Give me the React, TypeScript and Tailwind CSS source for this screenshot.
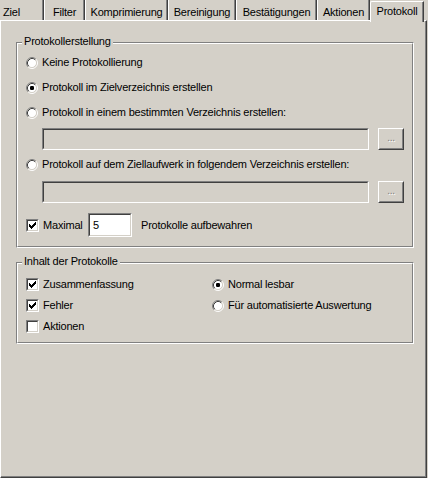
import React from "react";

const Radio = ({ checked = false }: { checked?: boolean }) => (
  <svg width="12" height="12" viewBox="0 0 12 12" className="shrink-0">
    <circle cx="6" cy="6" r="4.5" fill="#ffffff" />
    <path d="M2.11 9.89 A5.5 5.5 0 0 1 9.89 2.11" fill="none" stroke="#808080" />
    <path d="M9.89 2.11 A5.5 5.5 0 0 1 2.11 9.89" fill="none" stroke="#ffffff" />
    <path d="M2.82 9.18 A4.5 4.5 0 0 1 9.18 2.82" fill="none" stroke="#404040" />
    <path d="M9.18 2.82 A4.5 4.5 0 0 1 2.82 9.18" fill="none" stroke="#d4d0c8" />
    {checked && <rect x="4" y="4" width="4" height="4" rx="1.2" fill="#000000" />}
  </svg>
);

const checkCols = [2, 3, 4, 3, 2, 1, 0];

const Checkbox = ({ checked = false }: { checked?: boolean }) => (
  <div className="w-[13px] h-[13px] shrink-0 border border-t-[#808080] border-l-[#808080] border-b-white border-r-white">
    <div className="w-full h-full border border-t-[#404040] border-l-[#404040] border-b-[#d4d0c8] border-r-[#d4d0c8] bg-white">
      {checked && (
        <svg width="9" height="9" viewBox="0 0 9 9" shapeRendering="crispEdges">
          {checkCols.map((top, i) => (
            <rect key={i} x={i + 1} y={top + 1} width="1" height="3" fill="#000000" />
          ))}
        </svg>
      )}
    </div>
  </div>
);

const Sunken = ({ className, white, children }: { className: string; white?: boolean; children?: React.ReactNode }) => (
  <div className={`${className} shrink-0 border border-t-[#808080] border-l-[#808080] border-b-white border-r-white`}>
    <div
      className={`w-full h-full border border-t-[#404040] border-l-[#404040] border-b-[#d4d0c8] border-r-[#d4d0c8] flex items-center pl-[2px] ${
        white ? "bg-white" : "bg-[#d4d0c8]"
      }`}
    >
      {children}
    </div>
  </div>
);

const BrowseButton = () => (
  <div className="w-[26px] h-[22px] shrink-0 border border-t-white border-l-white border-b-[#404040] border-r-[#404040]">
    <div className="w-full h-full border border-t-[#d4d0c8] border-l-[#d4d0c8] border-b-[#808080] border-r-[#808080] flex items-center justify-center text-[#808080] [text-shadow:1px_1px_0_#ffffff] text-[10px] leading-none pb-[2px]">
      ...
    </div>
  </div>
);

const GroupBox = ({ title, className, children }: { title: string; className: string; children: React.ReactNode }) => (
  <div className={`relative ml-[15px] w-[398px] border border-t-[#808080] border-l-[#808080] border-b-white border-r-white ${className}`}>
    <div className="h-full border border-t-white border-l-white border-b-[#808080] border-r-[#808080]">{children}</div>
    <span className="absolute left-[5px] top-[-8px] px-[2px] bg-[#d4d0c8]">{title}</span>
  </div>
);

const Tab = ({ label, className, active }: { label: string; className: string; active?: boolean }) => (
  <div
    className={`${className} flex justify-center border-l border-l-white border-r border-r-[#404040] shadow-[inset_-1px_0_0_#808080] bg-[#d4d0c8] ${
      active
        ? "relative z-10 self-start mt-[1px] h-[21px] border-t border-t-white rounded-tl-[2px] items-start pt-[3px]"
        : "h-[20px] items-center pt-[4px]"
    }`}
  >
    {label}
  </div>
);

export default function App() {
  return (
    <div className="w-[428px] h-[478px] bg-[#d4d0c8] text-black text-[11px] leading-[13px] tracking-[-0.2px] font-['Liberation_Sans',Arial,sans-serif] overflow-hidden">
      {/* Tabs */}
      <div className="flex h-[20px]">
        <Tab label="Ziel" className="w-[46px] ml-[-2px] !justify-start pl-[4px]" />
        <Tab label="Filter" className="w-[41px]" />
        <Tab label="Komprimierung" className="w-[83px]" />
        <Tab label="Bereinigung" className="w-[68px]" />
        <Tab label="Bestätigungen" className="w-[81px]" />
        <Tab label="Aktionen" className="w-[53px]" />
        <Tab label="Protokoll" className="w-[54px]" active />
      </div>

      {/* Panel */}
      <div className="w-[427px] h-[458px] border-l border-t border-l-white border-t-white border-r border-b border-r-[#404040] border-b-[#404040] shadow-[inset_-1px_-1px_0_#808080] pt-[21px]">
        <GroupBox title="Protokollerstellung" className="h-[206px]">
          <div className="flex flex-col pt-[12px] pl-[8px]">
            <div className="flex items-center gap-[4px] h-[13px]">
              <Radio />
              <span>Keine Protokollierung</span>
            </div>
            <div className="flex items-center gap-[4px] h-[13px] mt-[12px]">
              <Radio checked />
              <span>Protokoll im Zielverzeichnis erstellen</span>
            </div>
            <div className="flex items-center gap-[4px] h-[13px] mt-[12px]">
              <Radio />
              <span>Protokoll in einem bestimmten Verzeichnis erstellen:</span>
            </div>
            <div className="flex items-center gap-[9px] mt-[9px] ml-[16px]">
              <Sunken className="w-[327px] h-[22px]" />
              <BrowseButton />
            </div>
            <div className="flex items-center gap-[4px] h-[13px] mt-[8px]">
              <Radio />
              <span>Protokoll auf dem Ziellaufwerk in folgendem Verzeichnis erstellen:</span>
            </div>
            <div className="flex items-center gap-[9px] mt-[10px] ml-[16px]">
              <Sunken className="w-[327px] h-[22px]" />
              <BrowseButton />
            </div>
            <div className="flex items-center h-[24px] mt-[10px]">
              <Checkbox checked />
              <span className="ml-[4px] w-[45px] shrink-0">Maximal</span>
              <Sunken className="w-[44px] h-[24px]" white>
                <span className="pl-[1px]">5</span>
              </Sunken>
              <span className="ml-[9px]">Protokolle aufbewahren</span>
            </div>
          </div>
        </GroupBox>

        <GroupBox title="Inhalt der Protokolle" className="h-[82px] mt-[14px]">
          <div className="grid grid-cols-[186px_1fr] gap-y-[8px] pt-[14px] pl-[8px]">
            <div className="flex items-center gap-[4px] h-[13px]">
              <Checkbox checked />
              <span>Zusammenfassung</span>
            </div>
            <div className="flex items-center gap-[4px] h-[13px]">
              <Radio checked />
              <span>Normal lesbar</span>
            </div>
            <div className="flex items-center gap-[4px] h-[13px]">
              <Checkbox checked />
              <span>Fehler</span>
            </div>
            <div className="flex items-center gap-[4px] h-[13px]">
              <Radio />
              <span>Für automatisierte Auswertung</span>
            </div>
            <div className="flex items-center gap-[4px] h-[13px]">
              <Checkbox />
              <span>Aktionen</span>
            </div>
          </div>
        </GroupBox>
      </div>
    </div>
  );
}
